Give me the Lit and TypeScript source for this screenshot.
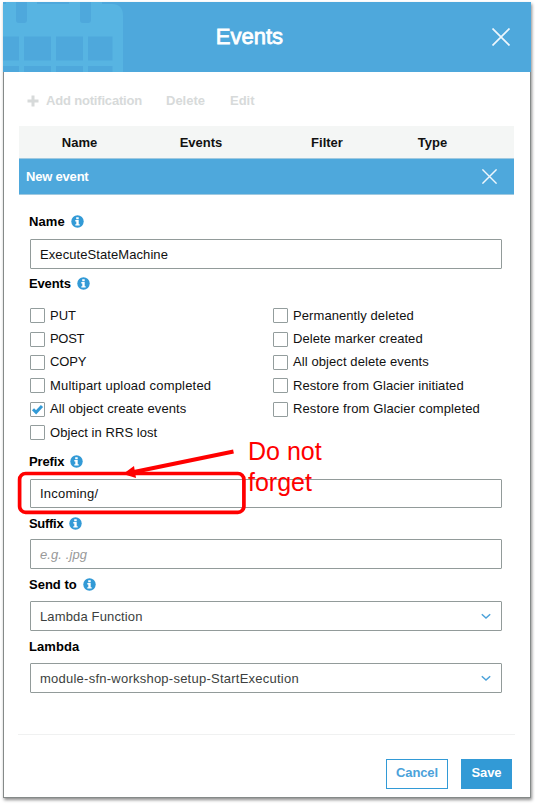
import { LitElement, html, css, svg, nothing } from "lit";
import { customElement, property } from "lit/decorators.js";
import { styleMap } from "lit/directives/style-map.js";

const track = (px: number) => styleMap({ letterSpacing: `${px}px` });

@customElement("info-icon")
class InfoIcon extends LitElement {
  static styles = css`
    :host { display: block; width: 13px; height: 13px; }
    svg { display: block; }
  `;
  render() {
    return html`<svg width="13" height="13" viewBox="0 0 13 13">
      <circle cx="6.5" cy="6.5" r="6.2" fill="#329ad6" />
      <path fill="#fff" d="M5.2 2.200h2.500v2H5.200zM4.300 5.100h3.400v4.100h1v1.400H4.300V9.200h1V6.500h-1z" />
    </svg>`;
  }
}

@customElement("close-icon")
class CloseIcon extends LitElement {
  @property({ type: Number }) size = 18;
  static styles = css`
    :host { display: block; }
    svg { display: block; }
  `;
  render() {
    return html`<svg width=${this.size} height=${this.size} viewBox="0 0 18 18">
      <path d="M.5.5l17 17M17.500.5l-17 17" stroke="#eef7fd" stroke-width="1.7" fill="none" />
    </svg>`;
  }
}

@customElement("event-check")
class EventCheck extends LitElement {
  @property() label = "";
  @property({ type: Boolean }) checked = false;
  @property({ type: Number }) spacing = 0;
  static styles = css`
    :host { display: flex; align-items: center; height: 23.4px; }
    .box {
      box-sizing: border-box; width: 15px; height: 15px; margin-right: 5px;
      border: 1px solid #939d9d; border-radius: 1px; background: #fff;
    }
    svg { display: block; }
    .text { white-space: nowrap; line-height: 16px; }
  `;
  render() {
    return html`<span class="box">${this.checked
        ? html`<svg width="13" height="13" viewBox="0 0 13 13">
            <path d="M2 6.200l3.100 3.100L11 3" fill="none" stroke="#329ad6" stroke-width="3" />
          </svg>`
        : nothing}</span><span class="text" style=${track(this.spacing)}>${this.label}</span>`;
  }
}

@customElement("app-root")
class AppRoot extends LitElement {
  static styles = css`
    :host {
      display: block; box-sizing: border-box; width: 535px; height: 806px;
      padding: 2px 4px 8px 3px; background: #fff; overflow: hidden;
      font-family: "Liberation Sans", Arial, sans-serif; font-size: 13px; color: #111;
    }
    .dialog {
      position: relative; box-sizing: border-box; width: 528px; height: 796px;
      background: #fff; border: 1px solid #858a89; border-top: 0;
      box-shadow: 1px 2px 3px rgba(0, 0, 0, 0.45);
    }
    .header {
      position: relative; display: flex; align-items: center; justify-content: center;
      height: 70px; margin: 0 -1px; background: #4ea8dc; color: #fff;
    }
    .calendar { position: absolute; left: 0; top: 0; }
    .title {
      font-size: 22px; line-height: 30px; -webkit-text-stroke: 0.8px #fff;
      padding-right: 35px;
    }
    .dismiss { position: absolute; right: 21px; top: 26px; }
    .toolbar {
      display: flex; align-items: center; height: 54px; padding: 3px 0 0 23px;
      box-sizing: border-box; font-weight: bold; color: #d7dada;
    }
    .toolbar span { white-space: nowrap; }
    .plus { margin-right: 7px; }
    .add { width: 120px; letter-spacing: -0.18px; }
    .delete { width: 64px; }
    .thead {
      display: grid; grid-template-columns: 121px 122px 130px 81px 41px;
      width: 495px; height: 32px; margin-left: 15px; align-items: center;
      background: #f4f6f5; color: #111; font-weight: bold; text-align: center;
    }
    .section {
      display: flex; align-items: center; justify-content: space-between;
      box-sizing: border-box; width: 495px; height: 37px; margin-left: 15px;
      padding: 0 17px 0 7px; background: #4ea8dc; color: #fff;
      border-top: 1px solid #9fc9e0; border-bottom: 1px solid #9fc9e0;
    }
    .section b { letter-spacing: -0.2px; }
    .form { width: 472px; padding: 10px 0 0 26px; }
    .label {
      display: flex; align-items: center; gap: 6px; margin-left: -1px;
      box-sizing: border-box; padding-bottom: 1px;
      font-weight: bold; color: #000; white-space: nowrap;
    }
    .h34 { height: 34px; }
    .h32 { height: 32px; }
    .h31 { height: 31px; }
    .h30 { height: 30px; }
    .field {
      display: flex; align-items: center; justify-content: space-between;
      box-sizing: border-box; height: 30px; padding: 0 10px 0 9px;
      border: 1px solid #929b9a; border-radius: 1px;
      color: #111; white-space: nowrap;
    }
    .short { height: 29px; padding-bottom: 1px; }
    .hint { color: #999; font-style: italic; }
    .select { color: #3c3f40; }
    .checks {
      display: grid; grid-template-columns: 243px 1fr; height: 146px;
      padding-top: 5px; box-sizing: border-box; align-items: start;
    }
    .footer {
      display: flex; justify-content: flex-end; gap: 13px;
      width: 497px; margin: 41px 0 0 14px; padding: 24px 3px 0 0;
      box-sizing: border-box; border-top: 1px solid #f0f1f1;
    }
    .button {
      display: flex; align-items: center; justify-content: center;
      box-sizing: border-box; width: 62px; height: 30px; padding-bottom: 3px;
      border: 1px solid #329ad6; color: #4ba2da; font-weight: bold;
      letter-spacing: -0.1px;
    }
    .primary { width: 51px; background: #329ad6; color: #fff; }
    .markup { position: absolute; left: 12px; top: 440px; }
    .note {
      position: absolute; left: 244px; top: 434px; color: #f00;
      font-size: 25px; line-height: 31px; white-space: pre;
    }
  `;

  private created: [string, number][] = [
    ["PUT", 0], ["POST", -0.3], ["COPY", -0.15], ["Multipart upload completed", 0.2],
    ["All object create events", 0.08], ["Object in RRS lost", 0.06],
  ];
  private removed: [string, number][] = [
    ["Permanently deleted", 0.08], ["Delete marker created", 0.05],
    ["All object delete events", 0.09], ["Restore from Glacier initiated", 0.08],
    ["Restore from Glacier completed", 0.11],
  ];

  private label(text: string, size: string, spacing: number, info = true) {
    return html`<div class="label ${size}"><span style=${track(spacing)}>${text}</span>${info
      ? html`<info-icon></info-icon>` : nothing}</div>`;
  }

  private select(text: string, spacing: number) {
    return html`<div class="field select"><span style=${track(spacing)}>${text}</span>
      <svg width="10" height="7" viewBox="0 0 10 7">
        <path d="M.8 1.300L5 5l4.200-3.700" fill="none" stroke="#4ba2da" stroke-width="1.500" />
      </svg></div>`;
  }

  private calendar() {
    const cells = [[0, 16], [21, 27], [53, 27], [85, 24.5]];
    return html`<svg class="calendar" width="121" height="70" viewBox="0 0 121 70">
      <path fill="#57b4e2" d="M0 2h109q11 0 11 12v56H0z" />
      <path fill="#57b4e2" d="M3 0h31v4H3zM66 0h33v4H66z" />
      <path fill="#4ea8dc" d="M13 0h11v18q0 3-3 3h-5q-3 0-3-3zM77 0h11v18q0 3-3 3h-5q-3 0-3-3z" />
      ${cells.map(([x, w]) => svg`
        <rect x=${x} y="34.500" width=${w} height="24" fill="#4ea8dc" />
        <rect x=${x} y="64" width=${w} height="6" fill="#4ea8dc" />`)}
    </svg>`;
  }

  render() {
    const item = ([label, spacing]: [string, number]) => html`<event-check
      .label=${label} .spacing=${spacing}
      .checked=${label === "All object create events"}></event-check>`;
    return html`<div class="dialog">
      <div class="header">
        ${this.calendar()}
        <div class="title">Events</div>
        <close-icon class="dismiss" .size=${18}></close-icon>
      </div>
      <div class="toolbar">
        <svg class="plus" width="12" height="12" viewBox="0 0 12 12">
          <path d="M6 .5v11M.5 6h11" stroke="#d7dada" stroke-width="3" />
        </svg>
        <span class="add">Add notification</span>
        <span class="delete">Delete</span>
        <span>Edit</span>
      </div>
      <div class="thead">
        <span>Name</span><span>Events</span><span>Filter</span><span>Type</span>
      </div>
      <div class="section"><b>New event</b><close-icon .size=${15}></close-icon></div>
      <div class="form">
        ${this.label("Name", "h34", 0.1)}
        <div class="field"><span style=${track(0.08)}>ExecuteStateMachine</span></div>
        ${this.label("Events", "h30", -0.15)}
        <div class="checks">
          <div>${this.created.map(item)}</div>
          <div>${this.removed.map(item)}</div>
        </div>
        ${this.label("Prefix", "h34", -0.15)}
        <div class="field short"><span style=${track(0.22)}>Incoming/</span></div>
        ${this.label("Suffix", "h31", -0.3)}
        <div class="field hint"><span style=${track(0.1)}>e.g. .jpg</span></div>
        ${this.label("Send to", "h32", 0)}
        ${this.select("Lambda Function", 0.14)}
        ${this.label("Lambda", "h32", 0.1, false)}
        ${this.select("module-sfn-workshop-setup-StartExecution", 0.24)}
      </div>
      <div class="footer">
        <div class="button">Cancel</div>
        <div class="button primary">Save</div>
      </div>
      <svg class="markup" width="240" height="80" viewBox="0 0 240 80">
        <rect x="3.600" y="31.500" width="224.300" height="38.800" rx="6" fill="none" stroke="#f00" stroke-width="3.700" />
        <path d="M217.500 9.500L118 30" stroke="#f00" stroke-width="4" />
        <path d="M107 32L118 24L120 36z" fill="#f00" />
      </svg>
      <div class="note">Do not
forget</div>
    </div>`;
  }
}
